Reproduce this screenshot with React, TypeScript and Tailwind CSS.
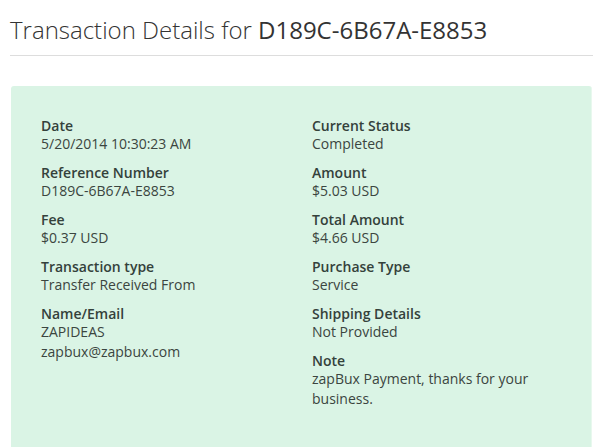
import React from "react";

type Item = { label: string; values: string[] };

const left: Item[] = [
  { label: "Date", values: ["5/20/2014 10:30:23 AM"] },
  { label: "Reference Number", values: ["D189C-6B67A-E8853"] },
  { label: "Fee", values: ["$0.37 USD"] },
  { label: "Transaction type", values: ["Transfer Received From"] },
  { label: "Name/Email", values: ["ZAPIDEAS", "zapbux@zapbux.com"] },
];

const right: Item[] = [
  { label: "Current Status", values: ["Completed"] },
  { label: "Amount", values: ["$5.03 USD"] },
  { label: "Total Amount", values: ["$4.66 USD"] },
  { label: "Purchase Type", values: ["Service"] },
  { label: "Shipping Details", values: ["Not Provided"] },
  { label: "Note", values: ["zapBux Payment, thanks for your business."] },
];

function Block({ item }: { item: Item }) {
  return (
    <div className="mb-[10px]">
      <div className="font-semibold text-[#34413b] leading-[17px]">{item.label}</div>
      {item.values.map((v, i) => (
        <div key={i} className="text-[#3b4540] leading-[20px]">
          {v}
        </div>
      ))}
    </div>
  );
}

export default function App() {
  return (
    <div
      className="w-[593px] h-[447px] overflow-hidden bg-white pl-[10px]"
      style={{ fontFamily: '"Open Sans", "Liberation Sans", sans-serif' }}
    >
      <div className="pt-[17px] pb-[12px] border-b border-[#dddddd] text-[24px] leading-[26px] text-[#333333]">
        <span className="font-light">Transaction Details for </span>
        <span className="font-normal">D189C-6B67A-E8853</span>
      </div>
      <div className="mt-[30px] mr-[1px] ml-[1px] min-h-[400px] bg-[#daf4e5] border-r border-[#e8f8ee] rounded-t-[3px] pt-[31px] pl-[30px] pr-[30px] text-[14px]">
        <div className="grid grid-cols-[271px_1fr]">
          <div>
            {left.map((it) => (
              <Block key={it.label} item={it} />
            ))}
          </div>
          <div className="w-[240px]">
            {right.map((it) => (
              <Block key={it.label} item={it} />
            ))}
          </div>
        </div>
      </div>
    </div>
  );
}
